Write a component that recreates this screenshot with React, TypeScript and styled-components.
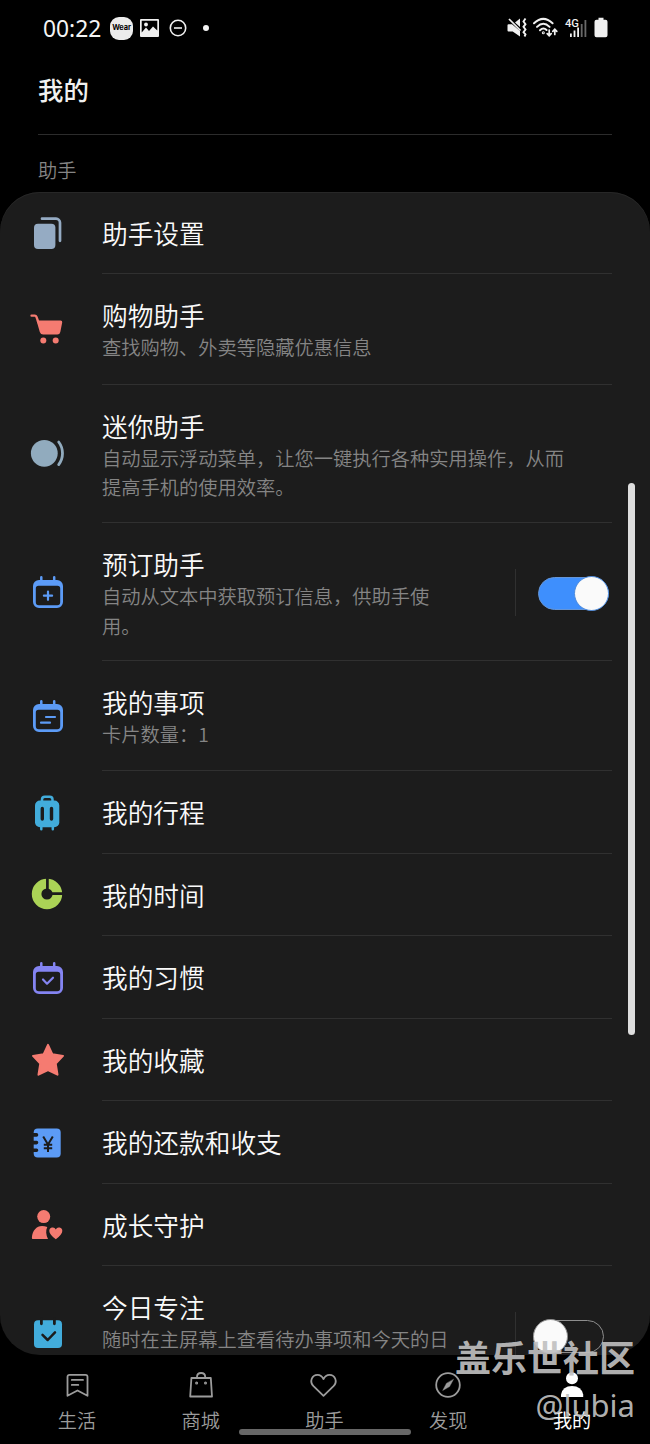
import React from "react";
import styled, { createGlobalStyle } from "styled-components";

const CARD = "#1c1c1c";
const CORAL = "#f57b71";
const BLUE = "#5c9bf6";
const TEAL = "#42acdb";
const VIOLET = "#8484f2";

const GlobalStyle = createGlobalStyle`
  * { box-sizing: border-box; }
  body { margin: 0; background: #000; }
`;

const Screen = styled.div`
  position: relative;
  width: 650px;
  height: 1444px;
  overflow: hidden;
  display: flex;
  flex-direction: column;
  background: #000;
  color: #fafafa;
  font-family: "Noto Sans CJK SC", "Noto Sans", sans-serif;
`;

const StatusBar = styled.header`
  display: flex;
  justify-content: space-between;
  align-items: center;
  height: 56px;
  padding: 0 42px 0 43px;
`;

const StatusGroup = styled.div<{ $gap: number }>`
  display: flex;
  align-items: center;
  gap: ${(p) => p.$gap}px;
`;

const Clock = styled.span`
  width: 60px;
  padding-top: 1px;
  font: 400 22.8px/30px "Noto Sans", sans-serif;
  white-space: nowrap;
  color: #f4f4f4;
`;

const WearBadge = styled.span`
  display: flex;
  align-items: center;
  justify-content: center;
  width: 23px;
  height: 23px;
  border-radius: 9px;
  background: #ececec;
  color: #000;
  font: 700 7.4px/10px Inter, sans-serif;
  letter-spacing: -0.1px;
`;

const Glyph = styled.svg`
  display: block;
  flex: none;
  overflow: visible;
`;

const PageTitle = styled.h1`
  height: 79px;
  margin: 0 38px;
  padding-top: 15px;
  border-bottom: 1px solid #2c2c2c;
  font-size: 25.4px;
  line-height: 36px;
  font-weight: 500;
  color: #f0f0f0;
`;

const SectionLabel = styled.h2`
  height: 57px;
  margin: 0;
  padding: 21px 38px 0;
  font-size: 19.2px;
  line-height: 28px;
  font-weight: 350;
  color: #858585;
`;

const Card = styled.main`
  height: 1163px;
  flex: none;
  overflow: hidden;
  border-radius: 40px;
  background: ${CARD};
  box-shadow: inset 0 1px 0 #272727;
`;

const Row = styled.div<{ $height: number }>`
  display: flex;
  align-items: center;
  height: ${(p) => p.$height}px;
  padding: 0 38px 0 26px;
`;

const RowBody = styled.div`
  flex: 1;
  display: flex;
  align-items: center;
  align-self: stretch;
  margin-left: 32px;
  border-bottom: 1px solid #303030;
`;

const RowText = styled.div<{ $width?: number }>`
  align-self: flex-start;
  width: ${(p) => (p.$width ? `${p.$width}px` : "100%")};
  padding-top: 24px;
`;

const RowTitle = styled.div`
  font-size: 25.7px;
  line-height: 34px;
  font-weight: 350;
  white-space: nowrap;
  color: #fafafa;
`;

const RowNote = styled.div`
  padding-top: 1px;
  font-size: 19.25px;
  line-height: 29.6px;
  font-weight: 350;
  color: #858585;
`;

const SwitchArea = styled.div<{ $on: boolean }>`
  display: flex;
  align-items: center;
  height: 47px;
  margin-top: 2px;
  padding-top: 2px;
  margin-left: auto;
  margin-right: ${(p) => (p.$on ? 3 : 8)}px;
  padding-left: ${(p) => (p.$on ? 22 : 17)}px;
  border-left: 1px solid #303030;
`;

const Track = styled.div<{ $on: boolean }>`
  display: flex;
  align-items: center;
  justify-content: ${(p) => (p.$on ? "flex-end" : "flex-start")};
  width: 71px;
  height: 33px;
  border-radius: 17px;
  border: 1.5px solid ${(p) => (p.$on ? "#6595d6" : "#8e8e8e")};
  background: ${(p) => (p.$on ? "#3e8ffd" : CARD)};
`;

const Knob = styled.div<{ $on: boolean }>`
  flex: none;
  width: 35px;
  height: 35px;
  margin: 0 -1px;
  border-radius: 50%;
  border: 1.5px solid ${(p) => (p.$on ? "#4d8bdd" : "#8e8e8e")};
  background: #fafafa;
`;

const ScrollThumb = styled.div`
  position: absolute;
  right: 15px;
  top: 483px;
  width: 7px;
  height: 552px;
  border-radius: 4px;
  background: #dedede;
`;

const TabBar = styled.nav`
  display: flex;
  height: 89px;
  padding: 14px 16px 0 15px;
`;

const Tab = styled.a<{ $active?: boolean }>`
  flex: 1;
  display: flex;
  flex-direction: column;
  align-items: center;
  gap: 5px;
  font-size: 19.2px;
  line-height: 28px;
  font-weight: ${(p) => (p.$active ? 400 : 350)};
  color: ${(p) => (p.$active ? "#ffffff" : "#9c9c9c")};
`;

const HomeHandle = styled.div`
  position: absolute;
  left: 239px;
  bottom: 9px;
  width: 172px;
  height: 6px;
  border-radius: 3px;
  background: #676767;
`;

const Watermark = styled.div`
  position: absolute;
  right: 15px;
  bottom: 17px;
  display: flex;
  flex-direction: column;
  align-items: flex-end;
  color: rgba(192, 192, 192, 0.93);
  white-space: nowrap;
`;

const WatermarkName = styled.span`
  font-size: 36px;
  line-height: 54px;
  font-weight: 700;
`;

const WatermarkUser = styled.span`
  font: 400 31px/44px "Noto Sans", sans-serif;
`;

const Icon = ({ children }: { children: React.ReactNode }) => (
  <Glyph width="44" height="44" viewBox="0 0 44 44" fill="none" strokeLinecap="round" strokeLinejoin="round">
    {children}
  </Glyph>
);

const CalendarIcon = ({ color, children }: { color: string; children: React.ReactNode }) => (
  <Icon>
    <path
      fill={color}
      fillRule="evenodd"
      d="M13 10H31A6 6 0 0 1 37 16V32A6 6 0 0 1 31 38H13A6 6 0 0 1 7 32V16A6 6 0 0 1 13 10ZM12.5 15.7A2.7 2.7 0 0 0 9.8 18.400V32.300A3 3 0 0 0 12.800 35.300H31.200A3 3 0 0 0 34.200 32.300V18.400A2.700 2.700 0 0 0 31.500 15.700Z"
    />
    <path stroke={color} strokeWidth="2.5" d="M15.300 7.300V12M28.200 7.300V12" />
    <g stroke={color} strokeWidth="2.2">{children}</g>
  </Icon>
);

const icons = {
  settings: (
    <Icon>
      <rect x="8" y="12.700" width="21.400" height="25.400" rx="4" fill="#95abc3" />
      <path d="M16 7.700H30A4 4 0 0 1 34 11.700V29.800" stroke="#95abc3" strokeWidth="2.700" />
    </Icon>
  ),
  cart: (
    <Icon>
      <path d="M5.500 8.700H8.800Q10 8.700 10.500 10L12.500 15.500" stroke={CORAL} strokeWidth="2.300" />
      <path d="M10.500 13.500H34.500Q36.600 13.500 36.200 15.500L34.300 25Q33.800 27.500 31.300 27.500H17.200Q14.600 27.500 13.800 25Z" fill={CORAL} />
      <circle cx="17.300" cy="33.600" r="3" fill={CORAL} />
      <circle cx="29.700" cy="33.600" r="3" fill={CORAL} />
    </Icon>
  ),
  mini: (
    <Icon>
      <circle cx="18.300" cy="21.300" r="13.400" fill="#91abbe" />
      <path d="M32.700 10Q36.500 15 36.500 21.300T32.700 32.600" stroke="#91abbe" strokeWidth="2.800" />
    </Icon>
  ),
  booking: (
    <CalendarIcon color={BLUE}>
      <path d="M22 21.600V29.800M17.900 25.700H26.100" />
    </CalendarIcon>
  ),
  tasks: (
    <CalendarIcon color={BLUE}>
      <path d="M20 23H29M15 28.700H24" />
    </CalendarIcon>
  ),
  luggage: (
    <Icon>
      <path d="M16 11V8.500Q16 5.700 18.800 5.700H23.700Q26.500 5.700 26.500 8.500V11M15.300 34V38.200M26.800 34V38.200" stroke={TEAL} strokeWidth="2.500" />
      <rect x="9" y="9.500" width="24.300" height="26.800" rx="5" fill={TEAL} />
      <path d="M16.300 17.400V28M25.500 17.400V28" stroke={CARD} strokeWidth="3.400" />
    </Icon>
  ),
  time: (
    <Icon>
      <circle cx="21" cy="21" r="10.400" stroke="#abd356" strokeWidth="9.600" />
      <path d="M21.400 4V18M25 20.600H38" stroke={CARD} strokeWidth="2.700" strokeLinecap="butt" />
    </Icon>
  ),
  habit: (
    <CalendarIcon color={VIOLET}>
      <path d="M17 23.500L21 27.700L27 21.700" />
    </CalendarIcon>
  ),
  star: (
    <Icon>
      <path d="M22 6.800L26.400 16.300L37 17.900L29.700 25.500L31.500 36.700L22 32.200L12.500 36.700L14.300 25.500L7 17.900L17.600 16.300Z" fill={CORAL} stroke={CORAL} strokeWidth="2" />
    </Icon>
  ),
  money: (
    <Icon>
      <rect x="7.700" y="7.500" width="27" height="29" rx="4" fill={BLUE} />
      <path d="M6 13.900H10.500M6 21.600H10.500M6 29.300H10.500" stroke={CARD} strokeWidth="3.600" />
      <path d="M17.200 15.500L22 23.500L26.800 15.500M22 23.500V31M17.800 23.700H26.200M17.800 27.300H26.200" stroke={CARD} strokeWidth="2" strokeLinecap="butt" />
    </Icon>
  ),
  family: (
    <Icon>
      <circle cx="17.700" cy="13.600" r="6.500" fill={CORAL} />
      <path d="M6.700 36Q5.800 36 5.900 34.500C6.400 27.500 10.500 23 16 23Q18.500 23 21.300 24C19.500 27.500 20 32 22 36Z" fill={CORAL} />
      <path d="M29.800 36.300Q23.300 31.500 23.300 28A3.400 3.400 0 0 1 29.800 26.500A3.400 3.400 0 0 1 36.300 28Q36.300 31.500 29.800 36.300Z" fill={CORAL} />
    </Icon>
  ),
  focus: (
    <Icon>
      <rect x="8" y="7.300" width="28" height="27.800" rx="4" fill={TEAL} />
      <path d="M15.400 6V10.800M28.400 6V10.800" stroke={CARD} strokeWidth="2.800" />
      <path d="M16.500 21.800L21.700 27L29 19.300" stroke={CARD} strokeWidth="2.500" />
    </Icon>
  ),
};

type Item = {
  icon: keyof typeof icons;
  title: string;
  note?: string;
  height: number;
  on?: boolean;
};

const items: Item[] = [
  { icon: "settings", title: "助手设置", height: 82 },
  { icon: "cart", title: "购物助手", note: "查找购物、外卖等隐藏优惠信息", height: 110.5 },
  { icon: "mini", title: "迷你助手", note: "自动显示浮动菜单，让您一键执行各种实用操作，从而提高手机的使用效率。", height: 138.5 },
  { icon: "booking", title: "预订助手", note: "自动从文本中获取预订信息，供助手使用。", height: 138, on: true },
  { icon: "tasks", title: "我的事项", note: "卡片数量：1", height: 110 },
  { icon: "luggage", title: "我的行程", height: 83 },
  { icon: "time", title: "我的时间", height: 82 },
  { icon: "habit", title: "我的习惯", height: 83 },
  { icon: "star", title: "我的收藏", height: 82 },
  { icon: "money", title: "我的还款和收支", height: 83 },
  { icon: "family", title: "成长守护", height: 82 },
  { icon: "focus", title: "今日专注", note: "随时在主屏幕上查看待办事项和今天的日", height: 138, on: false },
];

const noteWidth = (item: Item) => {
  if (item.on === undefined) return 480;
  return item.on ? 340 : 350;
};

const TabIcon = ({ children }: { children: React.ReactNode }) => (
  <Glyph width="32" height="32" viewBox="0 0 32 32" fill="none" stroke="currentColor" strokeWidth="1.800" strokeLinecap="round" strokeLinejoin="round">
    {children}
  </Glyph>
);

const tabs = [
  {
    label: "生活",
    icon: (
      <TabIcon>
        <path d="M6.500 26.800V7.800Q6.500 5.800 8.500 5.800H24.500Q26.500 5.800 26.500 7.800V26.800L16.500 21.500ZM10.800 10.900H22M10.800 15.900H17.300" />
      </TabIcon>
    ),
  },
  {
    label: "商城",
    icon: (
      <TabIcon>
        <path d="M6.400 9H25.800L27 27.500H5.200ZM12 9V8Q12 4 16.100 4T20.200 8V9" />
        <circle cx="11.600" cy="14" r="0.600" />
        <circle cx="20.500" cy="14" r="0.600" />
      </TabIcon>
    ),
  },
  {
    label: "助手",
    icon: (
      <TabIcon>
        <path d="M15.500 26.900L5.500 17.200C1 12.500 4 5.800 9.500 5.800Q13.500 5.800 15.500 10Q17.500 5.800 21.500 5.800C27 5.800 30 12.500 25.500 17.200Z" />
      </TabIcon>
    ),
  },
  {
    label: "发现",
    icon: (
      <TabIcon>
        <circle cx="16" cy="16" r="11.800" />
        <path d="M21.400 10.500L17.600 17.600L10.700 21.500L14.400 14.400Z" fill="currentColor" strokeWidth="0.400" />
      </TabIcon>
    ),
  },
  {
    label: "我的",
    active: true,
    icon: (
      <TabIcon>
        <g fill="currentColor" stroke="none">
          <circle cx="16" cy="9.300" r="6" />
          <path d="M5 28V25.500Q6.500 16.900 16 16.900T27.200 25.500V28Z" />
        </g>
      </TabIcon>
    ),
  },
];

export default function App() {
  return (
    <>
      <GlobalStyle />
      <Screen>
        <StatusBar>
          <StatusGroup $gap={7}>
            <Clock>00:22</Clock>
            <WearBadge>Wear</WearBadge>
            <Glyph width="19" height="18" viewBox="0 0 19 18">
              <path fill="#f0f0f0" fillRule="evenodd" d="M1 0H18Q19 0 19 1V17Q19 18 18 18H1Q0 18 0 17V1Q0 0 1 0ZM1.700 1.700V13.500L6 8.500L9 12L13 7.500L17.300 11.500V1.700Z" />
              <circle cx="6" cy="5.500" r="1.900" fill="#f0f0f0" />
            </Glyph>
            <Glyph width="24" height="18" viewBox="0 0 24 18" fill="none" stroke="#f0f0f0" strokeWidth="1.600">
              <circle cx="12" cy="9" r="7.700" />
              <path d="M8 9H16" />
            </Glyph>
            <Glyph width="16" height="6" viewBox="0 0 16 6">
              <circle cx="9" cy="3" r="3" fill="#f4f4f4" />
            </Glyph>
          </StatusGroup>
          <StatusGroup $gap={7}>
            <Glyph width="19" height="20" viewBox="0 0 19 20" fill="none">
              <path d="M1.500 6.200H5L13 13V18.500L5.700 13.500H1.500Q0.500 13.500 0.500 12.500V7.200Q0.500 6.200 1.500 6.200ZM8 4.500L13 0.500V9Z" fill="#f0f0f0" />
              <path d="M2 1L13.500 12.500" stroke="#f0f0f0" strokeWidth="1.700" />
              <path d="M18.500 0.500L16.500 3.500L18.500 6.200L16.500 8.800L18.500 11.500L16.500 14.200L18.500 16.500L17.500 18.500" stroke="#f0f0f0" strokeWidth="1.900" />
            </Glyph>
            <Glyph width="25" height="20" viewBox="0 0 25 20" fill="none" stroke="#f0f0f0" strokeWidth="2" strokeLinecap="round">
              <path d="M1 5.200Q10.300 -3.500 19.600 5.200M4 8.900Q10.300 2.700 16.600 8.900M7 12.300Q10.300 9 13.600 12" />
              <circle cx="10.300" cy="14.700" r="0.500" />
              <path d="M16.200 12V17.500M14.200 15.700L16.200 17.800L18.200 15.700M21.800 16.500V11.500M19.800 13.300L21.800 11.200L23.800 13.300" strokeWidth="1.700" />
            </Glyph>
            <Glyph width="22" height="20" viewBox="0 0 22 20">
              <text x="0" y="8.700" fill="#f0f0f0" fontFamily="Roboto, sans-serif" fontSize="11.5" fontWeight="500" textLength="14" lengthAdjust="spacingAndGlyphs">4G</text>
              <path fill="#f0f0f0" d="M5 15.500H6.800V19H5ZM8.600 12.500H10.400V19H8.600ZM12.200 9.500H14V19H12.200Z" />
              <path fill="#686868" d="M15.800 6H17.600V19H15.800ZM19.500 2H21.300V19H19.500Z" />
            </Glyph>
            <Glyph width="14" height="20" viewBox="0 0 14 20">
              <path fill="#f0f0f0" d="M4.500 -0.200H9.500V1.800H11.500Q13.500 1.800 13.500 3.800V17.200Q13.500 19.200 11.500 19.200H2.500Q0.500 19.200 0.500 17.200V3.800Q0.500 1.800 2.500 1.800H4.500Z" />
            </Glyph>
          </StatusGroup>
        </StatusBar>
        <PageTitle>我的</PageTitle>
        <SectionLabel>助手</SectionLabel>
        <Card>
          {items.map((item) => (
            <Row key={item.title} $height={item.height}>
              {icons[item.icon]}
              <RowBody>
                <RowText $width={noteWidth(item)}>
                  <RowTitle>{item.title}</RowTitle>
                  {item.note && <RowNote>{item.note}</RowNote>}
                </RowText>
                {item.on !== undefined && (
                  <SwitchArea $on={item.on}>
                    <Track $on={item.on}>
                      <Knob $on={item.on} />
                    </Track>
                  </SwitchArea>
                )}
              </RowBody>
            </Row>
          ))}
        </Card>
        <TabBar>
          {tabs.map((tab) => (
            <Tab key={tab.label} $active={tab.active}>
              {tab.icon}
              {tab.label}
            </Tab>
          ))}
        </TabBar>
        <ScrollThumb />
        <HomeHandle />
        <Watermark>
          <WatermarkName>盖乐世社区</WatermarkName>
          <WatermarkUser>@lubia</WatermarkUser>
        </Watermark>
      </Screen>
    </>
  );
}
